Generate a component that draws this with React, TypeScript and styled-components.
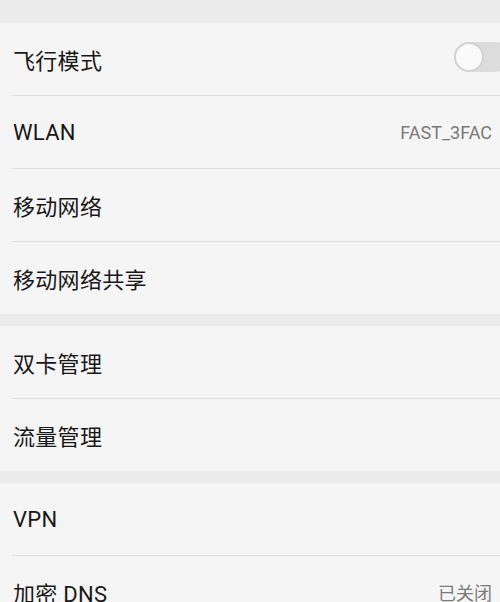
import styled, { createGlobalStyle } from "styled-components";

const GlobalStyle = createGlobalStyle`
  html, body {
    margin: 0;
    padding: 0;
    background: #ebebeb;
    overflow: hidden;
  }
  body {
    font-family: Roboto, "Noto Sans CJK SC", sans-serif;
  }
`;

const Page = styled.div`
  width: 500px;
  height: 602px;
  overflow: hidden;
  background: #ebebeb;
  display: flex;
  flex-direction: column;
`;

// title bar, scrolled mostly out of view at the top
const Header = styled.div`
  height: 23px;
  flex: none;
  overflow: hidden;
  display: flex;
  align-items: flex-start;
  gap: 30px;
  padding-left: 24px;
  color: #b8b8b8;
  font-size: 22px;
  line-height: 26px;
  span {
    margin-top: -23px;
  }
`;

const Group = styled.div`
  background: #f5f5f5;
  flex: none;
  & + & {
    margin-top: 12px;
  }
`;

const Row = styled.div`
  height: 72px;
  display: flex;
  align-items: center;
  justify-content: space-between;
  padding: 0 8px 0 13px;
  overflow: hidden;
`;

const Divider = styled.div`
  height: 1px;
  margin-left: 12px;
  background: #dedede;
`;

const Label = styled.span`
  font-size: 22px;
  color: #181818;
  letter-spacing: 0.3px;
`;

const Value = styled.span`
  font-size: 18px;
  color: #7a7a7a;
`;

const Toggle = styled.div`
  width: 56px;
  height: 30px;
  border-radius: 15px;
  background: #dcdcdc;
  margin-right: -18px;
  margin-top: -4px;
  position: relative;
  flex: none;
  &::before {
    content: "";
    position: absolute;
    left: 0;
    top: 0;
    width: 26px;
    height: 26px;
    border-radius: 50%;
    background: #fafafa;
    border: 2px solid #d2d2d2;
  }
`;

type Item = { label: string; value?: string; toggle?: boolean };

const groups: Item[][] = [
  [
    { label: "飞行模式", toggle: true },
    { label: "WLAN", value: "FAST_3FAC" },
    { label: "移动网络" },
    { label: "移动网络共享" },
  ],
  [{ label: "双卡管理" }, { label: "流量管理" }],
  [{ label: "VPN" }, { label: "加密 DNS", value: "已关闭" }],
];

export default function App() {
  return (
    <>
      <GlobalStyle />
      <Page>
        <Header>
          <span>‹</span>
          <span>更多连接设置</span>
        </Header>
        {groups.map((group, gi) => (
          <Group key={gi}>
            {group.map((item, i) => (
              <div key={item.label}>
                {i > 0 && <Divider />}
                <Row>
                  <Label>{item.label}</Label>
                  {item.value && <Value>{item.value}</Value>}
                  {item.toggle && <Toggle />}
                </Row>
              </div>
            ))}
          </Group>
        ))}
      </Page>
    </>
  );
}
